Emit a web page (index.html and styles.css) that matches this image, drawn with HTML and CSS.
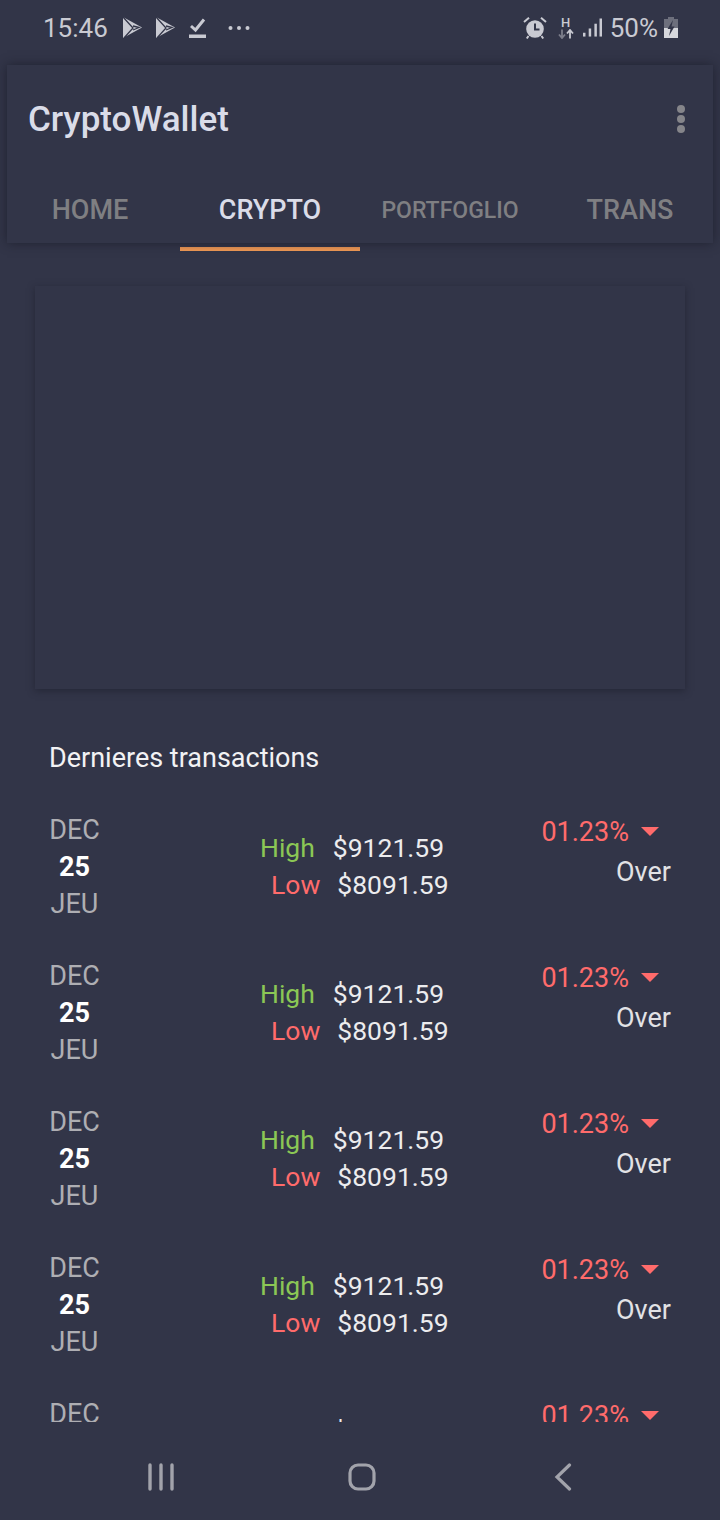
FILE: index.html
```html
<!DOCTYPE html>
<html>
<head>
    <title>CryptoWallet</title>
    <meta charset="utf-8">
    <link rel="stylesheet" href="styles.css">
</head>
<body>
    <div class="screen">
        <div class="status">
            <div class="status-left">
                <span class="clock">15:46</span>
                <svg class="ic-play" viewBox="0 0 19 21"><path d="M0 0 L19 10.5 L0 21 Z" fill="#c9cad2"/><path d="M0 0 L10 11 L1 21 M10 9 L16 10.5 L10 13" fill="none" stroke="#323548" stroke-width="1.3"/></svg>
                <svg class="ic-play" viewBox="0 0 19 21"><path d="M0 0 L19 10.5 L0 21 Z" fill="#c9cad2"/><path d="M0 0 L10 11 L1 21 M10 9 L16 10.5 L10 13" fill="none" stroke="#323548" stroke-width="1.3"/></svg>
                <svg class="ic-check" viewBox="0 0 17 21"><path d="M2 9 L6.5 13 L15 2.5" fill="none" stroke="#c9cad2" stroke-width="3"/><rect x="0" y="17.5" width="17" height="3.5" fill="#c9cad2"/></svg>
                <svg class="ic-more" viewBox="0 0 22 6"><circle cx="2.5" cy="3" r="2" fill="#c9cad2"/><circle cx="11" cy="3" r="2" fill="#c9cad2"/><circle cx="19.5" cy="3" r="2" fill="#c9cad2"/></svg>
            </div>
            <div class="status-right">
                <svg class="ic-alarm" viewBox="0 0 24 24"><circle cx="12" cy="13" r="8.8" fill="#c9cad2"/><path d="M12 7.5 V13.5 H16.5" fill="none" stroke="#323548" stroke-width="2"/><path d="M1 6 L6 1.8 M23 6 L18 1.8 M5.5 20 L3.8 22.5 M18.5 20 L20.2 22.5" fill="none" stroke="#c9cad2" stroke-width="2"/></svg>
                <div class="net">
                    <span class="net-h">H</span>
                    <svg viewBox="0 0 16 9"><path d="M4 0 V8 M1 5 L4 8.5 L7 5" fill="none" stroke="#7c7e8b" stroke-width="1.8"/><path d="M12 9 V1 M9 4 L12 .5 L15 4" fill="none" stroke="#c9cad2" stroke-width="1.8"/></svg>
                </div>
                <svg class="ic-signal" viewBox="0 0 20 20"><rect x="0" y="15" width="2.6" height="4" fill="#c9cad2"/><rect x="6" y="10.5" width="2.6" height="8.5" fill="#c9cad2"/><rect x="12" y="5.5" width="2.6" height="13.5" fill="#c9cad2"/><rect x="17.4" y="0" width="2.6" height="19" fill="#c9cad2"/></svg>
                <span class="battery-text">50%</span>
                <svg class="ic-battery" viewBox="0 0 14 21"><rect x="4" y="0" width="6" height="2" fill="#6d6f7c"/><rect x="0" y="2" width="14" height="9" fill="#6d6f7c"/><rect x="0" y="11" width="14" height="10" fill="#d6d7dc"/><path d="M9 3 L3.5 12 H6.5 L5 19 L10.5 9.5 H7.5 Z" fill="#323548"/></svg>
            </div>
        </div>

        <div class="appbar">
            <div class="appbar-top">
                <span class="app-title">CryptoWallet</span>
                <div class="menu-dots"><i></i><i></i><i></i></div>
            </div>
            <div class="tabs">
                <div class="tab">HOME</div>
                <div class="tab tab-active">CRYPTO</div>
                <div class="tab tab-small">PORTFOGLIO</div>
                <div class="tab">TRANS</div>
            </div>
        </div>
        <div class="tab-line"><div class="tab-indicator"></div></div>

        <div class="chart-card"></div>

        <div class="section-title">Dernieres transactions</div>

        <div class="list">
            <div class="row">
                <div class="date"><span>DEC</span><b>25</b><span>JEU</span></div>
                <div class="prices">
                    <div class="high"><span class="green">High</span><span>$9121.59</span></div>
                    <div class="low"><span class="red">Low</span><span>$8091.59</span></div>
                </div>
                <div class="change">
                    <div class="pct"><span class="red">01.23%</span><i class="arrow"></i></div>
                    <div class="over">Over</div>
                </div>
            </div>
            <div class="row">
                <div class="date"><span>DEC</span><b>25</b><span>JEU</span></div>
                <div class="prices">
                    <div class="high"><span class="green">High</span><span>$9121.59</span></div>
                    <div class="low"><span class="red">Low</span><span>$8091.59</span></div>
                </div>
                <div class="change">
                    <div class="pct"><span class="red">01.23%</span><i class="arrow"></i></div>
                    <div class="over">Over</div>
                </div>
            </div>
            <div class="row">
                <div class="date"><span>DEC</span><b>25</b><span>JEU</span></div>
                <div class="prices">
                    <div class="high"><span class="green">High</span><span>$9121.59</span></div>
                    <div class="low"><span class="red">Low</span><span>$8091.59</span></div>
                </div>
                <div class="change">
                    <div class="pct"><span class="red">01.23%</span><i class="arrow"></i></div>
                    <div class="over">Over</div>
                </div>
            </div>
            <div class="row">
                <div class="date"><span>DEC</span><b>25</b><span>JEU</span></div>
                <div class="prices">
                    <div class="high"><span class="green">High</span><span>$9121.59</span></div>
                    <div class="low"><span class="red">Low</span><span>$8091.59</span></div>
                </div>
                <div class="change">
                    <div class="pct"><span class="red">01.23%</span><i class="arrow"></i></div>
                    <div class="over">Over</div>
                </div>
            </div>
            <!-- last row runs under the nav bar, only its top shows -->
            <div class="row">
                <div class="date"><span>DEC</span></div>
                <div class="prices">
                    <div class="high"><span class="green">High</span><span>$9121.59</span></div>
                </div>
                <div class="change">
                    <div class="pct"><span class="red">01.23%</span><i class="arrow"></i></div>
                </div>
            </div>
        </div>

        <div class="navbar">
            <svg class="nav-recent" viewBox="0 0 28 28"><path d="M3 2 V26 M14 2 V26 M25 2 V26" fill="none" stroke="#a2a3ab" stroke-width="3.4" stroke-linecap="round"/></svg>
            <svg class="nav-home" viewBox="0 0 28 28"><rect x="2" y="2" width="24" height="24" rx="8" fill="none" stroke="#a2a3ab" stroke-width="3.2"/></svg>
            <svg class="nav-back" viewBox="0 0 18 28"><path d="M15.5 2 L3 14 L15.5 26" fill="none" stroke="#a2a3ab" stroke-width="3.2" stroke-linecap="round"/></svg>
        </div>
    </div>
</body>
</html>
```

FILE: styles.css
```css
* {
    box-sizing: border-box;
}
body {
    margin: 0;
    background: #323548;
    font-family: Roboto, "Liberation Sans", sans-serif;
}
.screen {
    width: 720px;
    height: 1520px;
    overflow: hidden;
    display: flex;
    flex-direction: column;
    background: #323548;
}

/* status bar */
.status {
    height: 55px;
    flex: none;
    padding: 0 42px 0 43px;
    display: flex;
    justify-content: space-between;
    align-items: center;
    color: #c9cad2;
}
.status-left, .status-right {
    display: flex;
    align-items: center;
}
.clock {
    font-size: 26px;
    margin-right: 15px;
}
.ic-play {
    width: 19px;
    height: 21px;
    margin-right: 14px;
}
.ic-check {
    width: 17px;
    height: 21px;
    margin-right: 22px;
}
.ic-more {
    width: 22px;
    height: 6px;
}
.ic-alarm {
    width: 24px;
    height: 24px;
    margin-right: 11px;
}
.net {
    width: 16px;
    display: flex;
    flex-direction: column;
    align-items: center;
    margin-right: 9px;
}
.net-h {
    font-size: 13px;
    line-height: 12px;
    font-weight: 500;
}
.net svg {
    width: 16px;
    height: 10px;
    display: block;
}
.ic-signal {
    width: 19px;
    height: 20px;
    margin-right: 8px;
}
.battery-text {
    font-size: 26px;
    margin-right: 6px;
}
.ic-battery {
    width: 14px;
    height: 21px;
}

/* app bar */
.appbar {
    flex: none;
    margin: 10px 7px 0;
    height: 178px;
    background: #323548;
    box-shadow: 0 0 10px rgba(24, 25, 38, 0.7);
    position: relative;
}
.appbar-top {
    height: 108px;
    padding: 0 28px 0 21px;
    display: flex;
    justify-content: space-between;
    align-items: center;
}
.app-title {
    font-size: 35px;
    font-weight: 500;
    color: #dadce8;
}
.menu-dots {
    display: flex;
    flex-direction: column;
    gap: 2px;
}
.menu-dots i {
    display: block;
    width: 8px;
    height: 8px;
    border-radius: 50%;
    background: #85858a;
}
.tabs {
    display: grid;
    grid-template-columns: repeat(4, 180px);
    margin: 0 -7px;
}
.tab {
    height: 70px;
    padding-top: 4px;
    display: flex;
    justify-content: center;
    align-items: center;
    font-size: 27px;
    font-weight: 500;
    color: #7f7f82;
}
.tab-active {
    color: #dadce8;
}
.tab-small {
    font-size: 23px;
}
.tab-line {
    flex: none;
    height: 8px;
    padding: 4px 0 0 180px;
}
.tab-indicator {
    width: 180px;
    height: 4px;
    background: #f29a55;
}

/* empty chart card */
.chart-card {
    flex: none;
    height: 403px;
    margin: 35px 35px 0;
    background: #323548;
    box-shadow: 0 2px 7px rgba(24, 25, 38, 0.5);
}
.section-title {
    flex: none;
    margin: 52px 0 0 49px;
    height: 34px;
    line-height: 34px;
    font-size: 27px;
    color: #f2f2f4;
}

/* transactions */
.list {
    flex: none;
    height: 647px;
    padding-top: 37px;
    overflow: hidden;
}
.row {
    height: 146px;
    padding: 0 49px 0 50px;
    display: flex;
    font-size: 27px;
}
.date {
    width: 49px;
    display: flex;
    flex-direction: column;
    align-items: center;
    line-height: 37px;
    color: #aeaeb3;
}
.date b {
    font-weight: 700;
    color: #ffffff;
}
.prices {
    width: 240px;
    margin-left: 161px;
    padding-top: 17px;
    font-size: 26.5px;
    line-height: 37px;
    color: #ececee;
}
.high, .low {
    display: flex;
}
.high span:first-child {
    margin-right: 18px;
}
.low {
    margin-left: 11px;
}
.low span:first-child {
    margin-right: 17px;
}
.green {
    color: #8bc755;
}
.red {
    color: #ff6b6b;
}
.change {
    margin-left: auto;
    padding-top: 2px;
    display: flex;
    flex-direction: column;
    align-items: flex-end;
}
.pct {
    height: 37px;
    line-height: 37px;
    display: flex;
    align-items: center;
}
.arrow {
    display: block;
    width: 0;
    height: 0;
    margin: 0 12px 2px 12px;
    border-left: 9px solid transparent;
    border-right: 9px solid transparent;
    border-top: 9px solid #ff6b6b;
}
.over {
    margin-top: 3px;
    line-height: 37px;
    color: #e2e2e5;
}

/* bottom nav */
.navbar {
    flex: 1;
    display: grid;
    grid-template-columns: 1fr 1fr 1fr;
    justify-items: center;
    align-items: center;
    padding: 12px 56px 0 60px;
}
.nav-recent, .nav-home {
    width: 28px;
    height: 28px;
}
.nav-back {
    width: 18px;
    height: 28px;
}
```
